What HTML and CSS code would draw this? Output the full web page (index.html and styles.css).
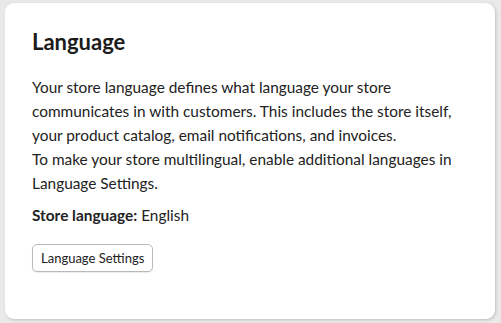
FILE: index.html
```html
<!DOCTYPE html>
<html>
<head>
<meta charset="utf-8">
<link rel="stylesheet" href="styles.css">
</head>
<body>
<div class="page">
  <section class="card">
    <h1 class="title">Language</h1>
    <p class="desc">Your store language defines what language your store communicates in with customers. This includes the store itself, your product catalog, email notifications, and invoices.<br>To make your store multilingual, enable additional languages in Language Settings.</p>
    <p class="store"><strong>Store language:</strong> English</p>
    <button class="btn">Language Settings</button>
  </section>
</div>
</body>
</html>
```
FILE: styles.css
```css
html, body {
  margin: 0;
  padding: 0;
  background: #e9e9e9;
}
body {
  font-family: Lato, "Open Sans", sans-serif;
  color: #222;
}
.page {
  width: 501px;
  height: 323px;
  box-sizing: border-box;
  padding: 3px 6px 4px 5px;
  display: flex;
}
.card {
  flex: 1;
  background: #fff;
  border-radius: 9px;
  box-shadow: 1px 1px 3px rgba(0,0,0,0.18);
  padding: 26px 27px 0 27px;
  box-sizing: border-box;
}
.title {
  margin: 0 0 20px 0;
  font-size: 22px;
  font-weight: 700;
  line-height: 26px;
  color: #1b1b1b;
}
.desc {
  margin: 0;
  font-size: 15.4px;
  line-height: 24px;
}
.store {
  margin: 8px 0 0 0;
  font-size: 15.4px;
  line-height: 24px;
}
.store strong {
  font-weight: 700;
}
.btn {
  margin-top: 17px;
  height: 28px;
  padding: 0 8px;
  font-family: Lato, sans-serif;
  font-size: 13px;
  color: #222;
  background: #fff;
  border: 1px solid #b9b9b9;
  border-radius: 5px;
  box-shadow: 0 1px 1px rgba(0,0,0,0.08);
}
```
